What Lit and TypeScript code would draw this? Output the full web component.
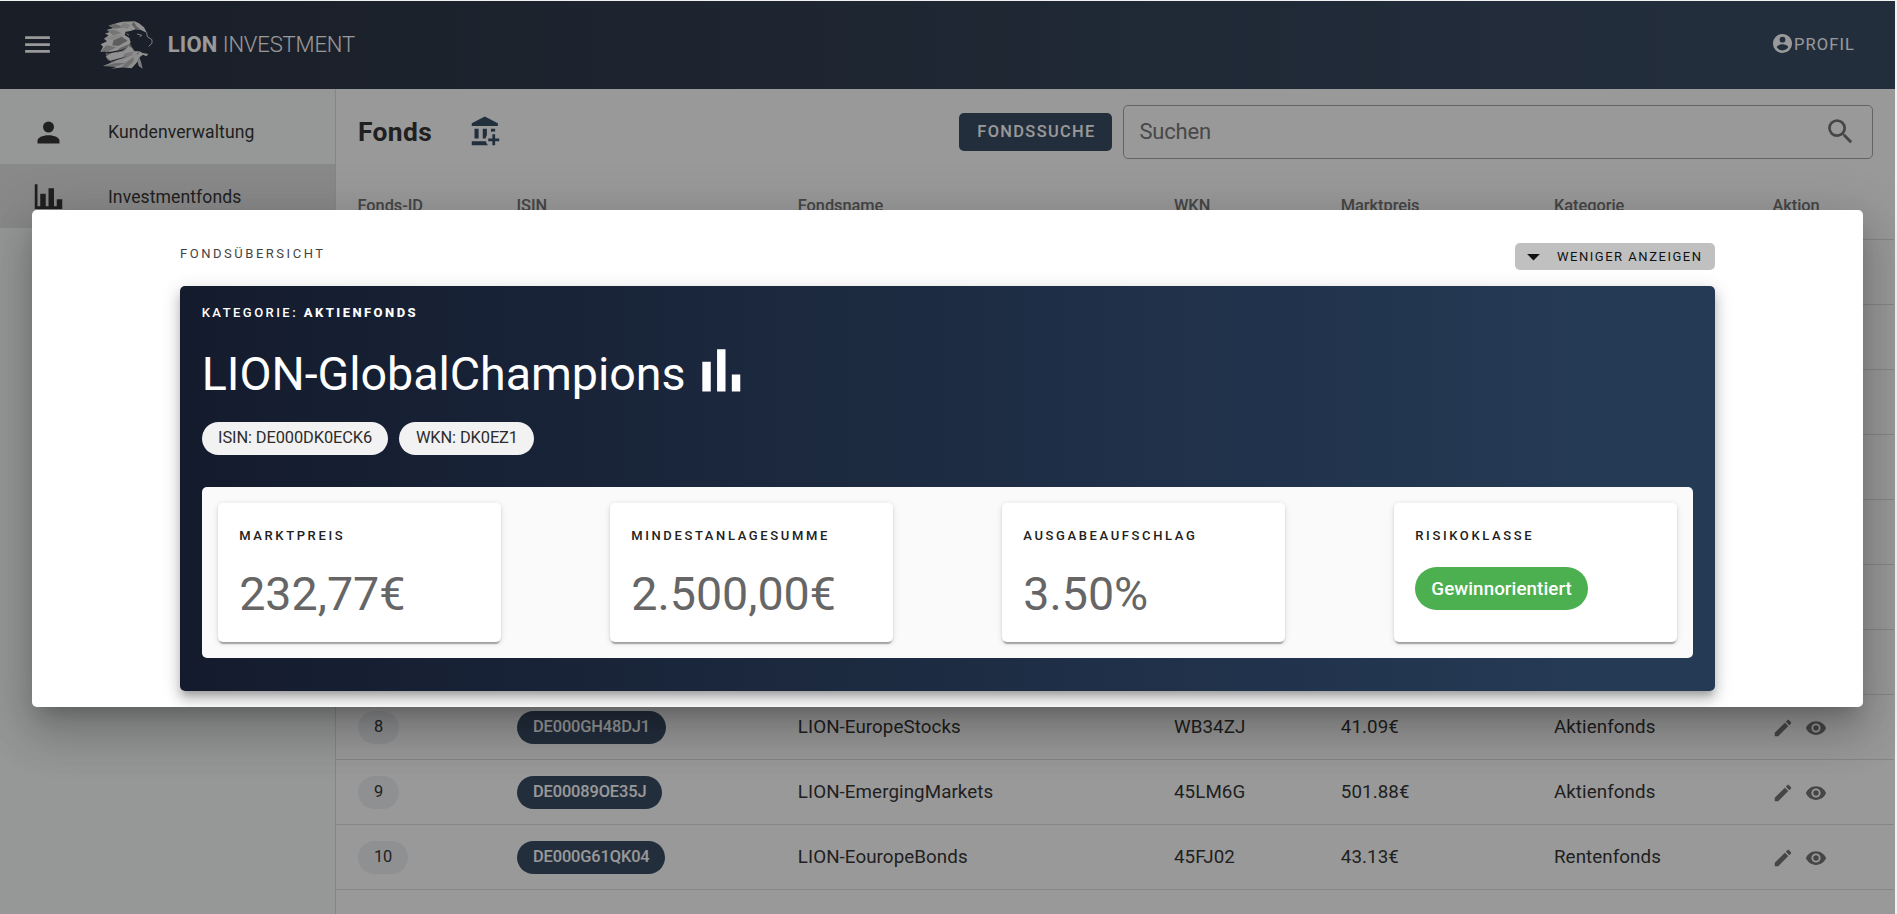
import { LitElement, html, css, svg } from "lit";
import { customElement } from "lit/decorators.js";

const P = {
  menu: "M3,6H21V8H3V6M3,11H21V13H3V11M3,16H21V18H3V16Z",
  account: "M12,4A4,4 0 0,1 16,8A4,4 0 0,1 12,12A4,4 0 0,1 8,8A4,4 0 0,1 12,4M12,14C16.42,14 20,15.79 20,18V20H4V18C4,15.79 7.58,14 12,14Z",
  chart: "M22,21H2V3H4V19H6V10H10V19H12V6H16V19H18V14H22V21Z",
  profile: "M12,19.2C9.5,19.2 7.29,17.92 6,16C6.03,14 10,12.9 12,12.9C14,12.9 17.97,14 18,16C16.71,17.92 14.5,19.2 12,19.2M12,5A3,3 0 0,1 15,8A3,3 0 0,1 12,11A3,3 0 0,1 9,8A3,3 0 0,1 12,5M12,2A10,10 0 0,0 2,12A10,10 0 0,0 12,22A10,10 0 0,0 22,12C22,6.47 17.5,2 12,2Z",
  search: "M9.5,3A6.5,6.5 0 0,1 16,9.5C16,11.11 15.41,12.59 14.44,13.73L14.71,14H15.5L20.5,19L19,20.5L14,15.5V14.71L13.73,14.44C12.59,15.41 11.11,16 9.5,16A6.5,6.5 0 0,1 3,9.5A6.5,6.5 0 0,1 9.5,3M9.5,5C7,5 5,7 5,9.5C5,12 7,14 9.5,14C12,14 14,12 14,9.5C14,7 12,5 9.5,5Z",
  pencil: "M20.71,7.04C21.1,6.65 21.1,6 20.71,5.63L18.37,3.29C18,2.9 17.35,2.9 16.96,3.29L15.12,5.12L18.87,8.87M3,17.25V21H6.75L17.81,9.93L14.06,6.18L3,17.25Z",
  eye: "M12,9A3,3 0 0,0 9,12A3,3 0 0,0 12,15A3,3 0 0,0 15,12A3,3 0 0,0 12,9M12,17A5,5 0 0,1 7,12A5,5 0 0,1 12,7A5,5 0 0,1 17,12A5,5 0 0,1 12,17M12,4.5C7,4.5 2.73,7.61 1,12C2.73,16.39 7,19.5 12,19.5C17,19.5 21.27,16.39 23,12C21.27,7.61 17,4.5 12,4.5Z",
  bankPlus: "M11.5,1L2,6V8H21V6L11.5,1M4,10V17H7V10H4M10,10V17H12.1C12.2,16.2 12.5,15.4 13,14.7V10H10M16,10V12.3C16.9,12 17.9,11.9 19,12.1V10H16M2,19V22H13.8C13.1,21.1 12.5,20.1 12.2,19H2M17,14V17H14V19H17V22H19V19H22V17H19V14H17Z",
  poll: "M3,22V8H7V22H3M10,22V2H14V22H10M17,22V14H21V22H17Z",
  down: "M7,10L12,15L17,10H7Z",
};

const icon = (d: string, cls: string) => html`<svg class="icon ${cls}" viewBox="0 0 24 24"><path d=${d}></path></svg>`;

const facets: [string, string][] = [
  ["#8c8c8c", "330,120 380,110 404,150 414,164 396,200 352,200 322,176 316,150"],
  ["#f0f0f0", "355,66 370,63 405,62 418,68 433,80 442,97 424,88 408,86 392,91 378,93 375,103 389,112 393,125 386,136 397,142 404,152 420,152 411,161 396,166 372,178 352,184 333,180 318,168 334,158 328,152 302,153 310,138 303,131 322,122 313,114 327,104 316,99 330,94 322,87 342,82 327,75"],
  ["#a8a8a8", "327,75 342,69 356,73 372,80 345,84"],
  ["#cdcdcd", "372,66 392,72 384,84 360,78"],
  ["#989898", "402,63 412,78 425,88 408,85 396,72"],
  ["#bdbdbd", "322,88 346,88 366,98 340,104"],
  ["#909090", "342,118 366,108 384,120 356,136 338,134"],
  ["#dedede", "313,114 342,104 372,104 344,118"],
  ["#b4b4b4", "304,152 320,134 350,140 330,150"],
  ["#a0a0a0", "360,142 390,130 384,138 372,152 348,156"],
  ["#c4c4c4", "376,158 404,152 394,166 364,178"],
  ["#ececec", "310,196 334,186 362,180 392,166 414,160 420,152 429,157 446,160 440,167 430,162 420,170 413,184 396,203 370,200 334,204 352,198"],
  ["#a6a6a6", "310,196 346,188 378,186 356,195"],
  ["#b4b4b4", "380,184 404,168 400,184 384,199 366,198"],
  ["#d0d0d0", "419,170 424,184 429,204 417,196 414,184"],
  ["#141c2d", "302,157 334,153 366,147 386,139 366,150 332,158"],
  ["#141c2d", "312,187 340,178 366,171 382,167 364,174 340,182"],
];
const lion = html`<svg class="lion" viewBox="295 55 170 155">
  ${facets.map(([c, p]) => svg`<polygon fill=${c} points=${p}></polygon>`)}
  <path d="M441 96L443 108L457 117L457 128L447 137M412 100L427 104L420 108M381 99L388 104" fill="none" stroke="#cfcfcf" stroke-width="3"></path>
</svg>`;

interface Fund { id: string; isin: string; name: string; wkn: string; price: string; category: string; }
const funds: Fund[] = [
  { id: "8", isin: "DE000GH48DJ1", name: "LION-EuropeStocks", wkn: "WB34ZJ", price: "41.09€", category: "Aktienfonds" },
  { id: "9", isin: "DE00089OE35J", name: "LION-EmergingMarkets", wkn: "45LM6G", price: "501.88€", category: "Aktienfonds" },
  { id: "10", isin: "DE000G61QK04", name: "LION-EouropeBonds", wkn: "45FJ02", price: "43.13€", category: "Rentenfonds" },
];
const stats: [string, string][] = [
  ["Marktpreis", "232,77€"],
  ["Mindestanlagesumme", "2.500,00€"],
  ["Ausgabeaufschlag", "3.50%"],
];

@customElement("app-root")
export class AppRoot extends LitElement {
  static styles = css`
    :host {
      display: block; position: relative; box-sizing: border-box; height: 914px; width: 1897px; padding: 1px 2px 0 0;
      overflow: hidden; background: #f0f2f2; font-family: Roboto, sans-serif; color: #212121;
    }
    * { box-sizing: border-box; }
    .icon { display: block; flex: none; fill: currentColor; width: 33px; height: 33px; }
    .page { height: 913px; display: flex; flex-direction: column; background: #fff; overflow: hidden; }
    header { height: 88px; flex: none; display: flex; align-items: center; color: #fff; padding: 0 40px 2px 21px;
      background: linear-gradient(90deg, #141c2d, #253a55 90%); }
    .lion { width: 56.67px; height: 51.67px; margin: 1px 0 0 44.3px; }
    .brand { margin: 1px 0 0 12.7px; font-size: 22px; line-height: 32px; font-weight: 300; white-space: pre; letter-spacing: -.15px; }
    .brand b { font-weight: 700; letter-spacing: .2px; }
    .profile { margin-left: auto; display: flex; align-items: center; font-size: 16.5px; letter-spacing: 1.1px; }
    .profile .icon { width: 23px; height: 23px; margin-bottom: 1px; }
    .body { flex: 1; display: flex; min-height: 0; }
    nav { width: 336px; flex: none; border-right: 1px solid #dadddc; background: #fafefb; padding-top: 11px; }
    .item { height: 64px; display: flex; align-items: center; padding-left: 32px; gap: 43px; font-size: 17.6px; letter-spacing: .08px; }
    .item.active { background: #e2e2e2; }
    .item.active span { padding-top: 1px; }
    main { flex: 1; min-width: 0; }
    .toolbar { height: 86px; display: flex; align-items: center; padding: 0 22px 0 22px; }
    h1 { margin: 0; font-size: 26.4px; line-height: 36px; font-weight: 700; letter-spacing: .35px; width: 111px; }
    .toolbar .bank { color: #243b55; margin-top: -1px; }
    .btn { margin-left: auto; width: 153px; height: 38px; border-radius: 5px; background: #253a55; color: #fff; font-weight: 500;
      font-size: 16.4px; letter-spacing: 1.36px; display: flex; align-items: center; justify-content: center; padding: 0 0 1px 2px; }
    .field { margin-left: 11px; width: 750px; height: 54px; border: 1px solid #9c9c9c; border-radius: 5px; display: flex; align-items: center;
      justify-content: space-between; padding: 0 15px 0 15.5px; font-size: 22px; color: #6a6a6a; letter-spacing: -.2px; }
    .field span { padding-bottom: 2px; }
    .field .icon { color: #676767; margin-bottom: 2px; }
    .row { display: grid; grid-template-columns: 159px 281.3px 376.2px 166.8px 213.2px 218.5px 1fr; align-items: center;
      height: 65.06px; padding: 0 0 1px 21.5px; border-bottom: 1px solid #dcdcdc; font-size: 18.75px; letter-spacing: .08px; margin-right: 1px; }
    .row.head { height: 65px; font-size: 16.4px; letter-spacing: -.05px; font-weight: 500; color: #666; padding-bottom: 4px; }
    .chip { display: inline-flex; align-items: center; height: 33px; border-radius: 17px; padding: 0 15.8px 2px; font-size: 16.4px; letter-spacing: -.12px;
      margin: 2px 0 0 .7px; vertical-align: top; }
    .chip.id { background: #edeff2; }
    .chip.isin { background: #253a55; color: #fff; font-weight: 500; }
    .acts { display: flex; gap: 10.6px; color: #666; padding: 2px 0 0 0; margin-left: -.5px; }
    .acts .icon { width: 22px; height: 22px; }
    .overlay { position: absolute; inset: 1px 2px 0 0; background: rgba(33,33,33,.46); display: flex; align-items: center; justify-content: center; padding-top: 2px; }
    .dialog { width: 1831px; height: 497px; border-radius: 5px; background: #fff; padding: 33px 148px 16px; overflow: hidden;
      display: flex; flex-direction: column; }
    .shade { border-radius: 5px; box-shadow: 0 13px 18px -8px rgba(0,0,0,.2), 0 28px 45px 4px rgba(0,0,0,.14), 0 11px 54px 9px rgba(0,0,0,.12); }
    .top { height: 27px; flex: none; display: flex; justify-content: space-between; align-items: center; margin-bottom: 16px; }
    .over { font-size: 13px; letter-spacing: 2.62px; text-transform: uppercase; line-height: 22px; }
    .top .over { font-weight: 400; color: #444; padding-bottom: 5px; letter-spacing: 2.53px; }
    .less { width: 200px; height: 27px; border-radius: 5px; background: #c0c0c0; display: flex; align-items: center; font-size: 13px; letter-spacing: 1.52px; text-transform: uppercase;
      font-weight: 400; padding: 0 0 1px 3px; color: #111; }
    .less .icon { width: 31px; height: 31px; margin-right: 8px; }
    .card { flex: 1; border-radius: 5px; color: #fff; padding: 16px 22px 0 21.7px; background: linear-gradient(90deg, #141b2d, #253a55 92%);
      box-shadow: 0 6px 6px -3px rgba(0,0,0,.2), 0 9px 12px 1px rgba(0,0,0,.14), 0 4px 17px 3px rgba(0,0,0,.12); }
    .card .cat { font-weight: 500; letter-spacing: 2.46px; }
    .card .cat b { font-weight: 800; }
    h2 { margin: 15px 0 13px; font-size: 46.6px; line-height: 70px; height: 70px; font-weight: 400; display: flex; align-items: center; gap: 10.5px; letter-spacing: -.03px; }
    h2 .icon { width: 50.6px; height: 50.6px; margin-top: -7px; }
    .chips { display: flex; gap: 11px; height: 33px; }
    .chips .chip { background: #f2f2f2; color: #2c2c2c; margin: 0; padding: 0 16.4px 2px; letter-spacing: -.1px; }
    .panel { margin-top: 32px; height: 171px; border-radius: 5px; background: #fafafa; color: #212121; padding: 16px; display: flex; justify-content: space-between; }
    .stat { width: 283.2px; height: 139.3px; border-radius: 5px; background: #fff; padding: 22px 21.5px;
      box-shadow: 0 4px 1px -2px rgba(0,0,0,.2), 0 2px 2px 0 rgba(0,0,0,.14), 0 1px 6px 0 rgba(0,0,0,.12); }
    .stat .over { font-weight: 500; }
    .value { margin-top: 19px; font-size: 46.6px; line-height: 56px; color: #666; }
    .risk { display: inline-flex; align-items: center; margin-top: 20px; height: 43px; border-radius: 22px; background: #4caf50; color: #fff; font-weight: 500;
      font-size: 18.75px; letter-spacing: .08px; padding: 0 16px; }
  `;

  render() {
    return html`
      <div class="page">
        <header>
          ${icon(P.menu, "")}${lion}
          <div class="brand"><b>LION</b> INVESTMENT</div>
          <div class="profile">${icon(P.profile, "")}<span>PROFIL</span></div>
        </header>
        <div class="body">
          <nav>
            <div class="item">${icon(P.account, "")}<span>Kundenverwaltung</span></div>
            <div class="item active">${icon(P.chart, "")}<span>Investmentfonds</span></div>
          </nav>
          <main>
            <div class="toolbar">
              <h1>Fonds</h1>${icon(P.bankPlus, "bank")}
              <div class="btn">FONDSSUCHE</div>
              <div class="field"><span>Suchen</span>${icon(P.search, "")}</div>
            </div>
            <div class="row head">
              ${["Fonds-ID", "ISIN", "Fondsname", "WKN", "Marktpreis", "Kategorie", "Aktion"].map((t) => html`<span>${t}</span>`)}
            </div>
            ${Array.from({ length: 7 }, () => html`<div class="row"></div>`)}
            ${funds.map((f) => html`<div class="row">
              <div><span class="chip id">${f.id}</span></div>
              <div><span class="chip isin">${f.isin}</span></div>
              <span>${f.name}</span><span>${f.wkn}</span><span>${f.price}</span><span>${f.category}</span>
              <div class="acts">${icon(P.pencil, "")}${icon(P.eye, "")}</div>
            </div>`)}
          </main>
        </div>
      </div>
      <div class="overlay"><div class="shade"><div class="dialog">
        <div class="top"><span class="over">Fondsübersicht</span><div class="less">${icon(P.down, "")}<span>Weniger anzeigen</span></div></div>
        <section class="card">
          <div class="over cat">Kategorie: <b>Aktienfonds</b></div>
          <h2><span>LION-GlobalChampions</span>${icon(P.poll, "")}</h2>
          <div class="chips"><span class="chip">ISIN: DE000DK0ECK6</span><span class="chip">WKN: DK0EZ1</span></div>
          <div class="panel">
            ${stats.map(([l, v]) => html`<div class="stat"><div class="over">${l}</div><div class="value">${v}</div></div>`)}
            <div class="stat"><div class="over">Risikoklasse</div><div class="risk">Gewinnorientiert</div></div>
          </div>
        </section>
      </div></div></div>`;
  }
}
